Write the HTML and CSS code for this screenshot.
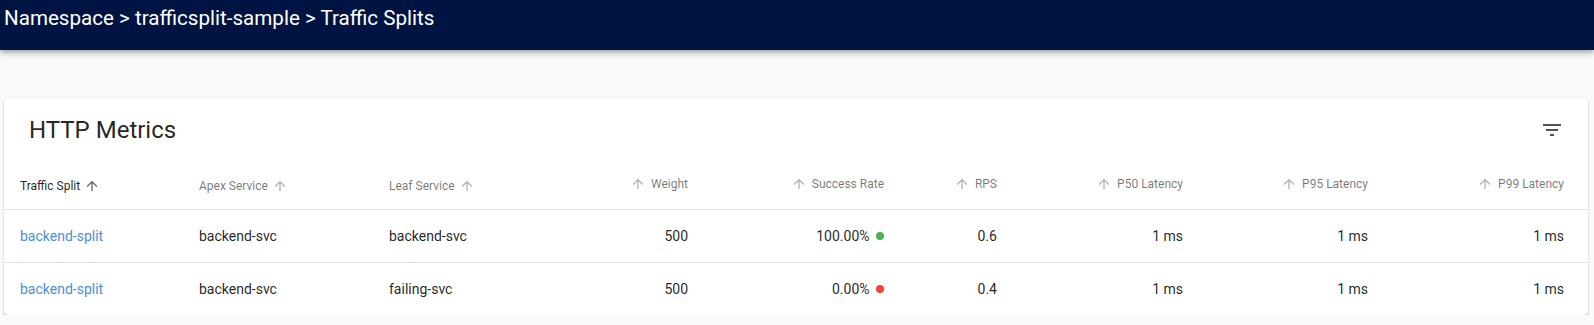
FILE: index.html
```html
<!DOCTYPE html>
<html lang="en">
<head>
    <meta charset="UTF-8">
    <title>Traffic Splits</title>
    <link rel="stylesheet" href="styles.css">
</head>
<body>
    <header class="app-bar">
        <div class="crumbs">Namespace &gt; trafficsplit-sample &gt; Traffic Splits</div>
    </header>

    <main class="content">
        <section class="card">
            <div class="card-toolbar">
                <h2 class="card-title">HTTP Metrics</h2>
                <svg class="filter-icon" viewBox="0 0 24 24" width="24" height="24">
                    <path d="M10 18h4v-2h-4v2zM3 6v2h18V6H3zm3 7h12v-2H6v2z"></path>
                </svg>
            </div>

            <table class="metrics">
                <colgroup>
                    <col style="width:179px">
                    <col style="width:190px">
                    <col style="width:190px">
                    <col style="width:141px">
                    <col style="width:196px">
                    <col style="width:113px">
                    <col style="width:186px">
                    <col style="width:185px">
                    <col style="width:204px">
                </colgroup>
                <thead>
                    <tr>
                        <th class="active"><span class="sort">Traffic Split<svg class="arrow" viewBox="0 0 24 24"><path d="M4 12l1.41 1.41L11 7.83V20h2V7.83l5.58 5.59L20 12l-8-8-8 8z"/></svg></span></th>
                        <th><span class="sort">Apex Service<svg class="arrow" viewBox="0 0 24 24"><path d="M4 12l1.41 1.41L11 7.83V20h2V7.83l5.58 5.59L20 12l-8-8-8 8z"/></svg></span></th>
                        <th><span class="sort">Leaf Service<svg class="arrow" viewBox="0 0 24 24"><path d="M4 12l1.41 1.41L11 7.83V20h2V7.83l5.58 5.59L20 12l-8-8-8 8z"/></svg></span></th>
                        <th class="num"><span class="sort"><svg class="arrow" viewBox="0 0 24 24"><path d="M4 12l1.41 1.41L11 7.83V20h2V7.83l5.58 5.59L20 12l-8-8-8 8z"/></svg>Weight</span></th>
                        <th class="num"><span class="sort"><svg class="arrow" viewBox="0 0 24 24"><path d="M4 12l1.41 1.41L11 7.83V20h2V7.83l5.58 5.59L20 12l-8-8-8 8z"/></svg>Success Rate</span></th>
                        <th class="num"><span class="sort"><svg class="arrow" viewBox="0 0 24 24"><path d="M4 12l1.41 1.41L11 7.83V20h2V7.83l5.58 5.59L20 12l-8-8-8 8z"/></svg>RPS</span></th>
                        <th class="num"><span class="sort"><svg class="arrow" viewBox="0 0 24 24"><path d="M4 12l1.41 1.41L11 7.83V20h2V7.83l5.58 5.59L20 12l-8-8-8 8z"/></svg>P50 Latency</span></th>
                        <th class="num"><span class="sort"><svg class="arrow" viewBox="0 0 24 24"><path d="M4 12l1.41 1.41L11 7.83V20h2V7.83l5.58 5.59L20 12l-8-8-8 8z"/></svg>P95 Latency</span></th>
                        <th class="num last"><span class="sort"><svg class="arrow" viewBox="0 0 24 24"><path d="M4 12l1.41 1.41L11 7.83V20h2V7.83l5.58 5.59L20 12l-8-8-8 8z"/></svg>P99 Latency</span></th>
                    </tr>
                </thead>
                <tbody>
                    <tr>
                        <td><a class="link" href="#">backend-split</a></td>
                        <td>backend-svc</td>
                        <td>backend-svc</td>
                        <td class="num">500</td>
                        <td class="num">100.00% <span class="dot good"></span></td>
                        <td class="num">0.6</td>
                        <td class="num">1 ms</td>
                        <td class="num">1 ms</td>
                        <td class="num last">1 ms</td>
                    </tr>
                    <tr>
                        <td><a class="link" href="#">backend-split</a></td>
                        <td>backend-svc</td>
                        <td>failing-svc</td>
                        <td class="num">500</td>
                        <td class="num">0.00% <span class="dot bad"></span></td>
                        <td class="num">0.4</td>
                        <td class="num">1 ms</td>
                        <td class="num">1 ms</td>
                        <td class="num last">1 ms</td>
                    </tr>
                </tbody>
            </table>
        </section>
    </main>
</body>
</html>
```

FILE: styles.css
```css
body {
    margin: 0;
    padding: 0;
    background-color: #fafafa;
    font-family: Roboto, 'Liberation Sans', sans-serif;
    color: rgba(0, 0, 0, 0.87);
}

.app-bar {
    height: 50px;
    background-color: #001443;
    box-shadow: 0 2px 4px -1px rgba(0, 0, 0, 0.2), 0 4px 5px 0 rgba(0, 0, 0, 0.14), 0 1px 10px 0 rgba(0, 0, 0, 0.12);
    position: relative;
    z-index: 1;
}

.crumbs {
    color: #ffffff;
    font-size: 20.6px;
    line-height: 24px;
    padding: 6px 0 0 4px;
}

.content {
    padding: 48px 6px 0 4px;
}

.card {
    background: #fff;
    border-radius: 4px;
    box-shadow: 0 1px 3px 0 rgba(0, 0, 0, 0.2), 0 1px 1px 0 rgba(0, 0, 0, 0.14), 0 2px 1px -1px rgba(0, 0, 0, 0.12);
    overflow: hidden;
}

.card-toolbar {
    height: 64px;
    display: flex;
    align-items: center;
    justify-content: space-between;
    padding: 0 24px 0 25px;
}

.card-title {
    margin: 0;
    font-size: 24px;
    font-weight: 400;
    line-height: 1;
}

.filter-icon {
    fill: #555;
}

.metrics {
    width: 100%;
    table-layout: fixed;
    border-collapse: collapse;
}

.metrics th,
.metrics td {
    padding: 0 16px;
    text-align: left;
    white-space: nowrap;
    border-bottom: 1px solid #e0e0e0;
}

.metrics th {
    height: 47px;
    font-size: 12px;
    font-weight: 400;
    color: rgba(0, 0, 0, 0.54);
}

.metrics th.active {
    color: rgba(0, 0, 0, 0.87);
}

.metrics td {
    height: 52px;
    font-size: 14px;
}

.metrics tbody tr:last-child td {
    border-bottom: none;
}

.metrics .num {
    text-align: right;
}

.metrics .last {
    padding-right: 24px;
}

.sort {
    display: inline-flex;
    align-items: center;
}

.arrow {
    width: 16px;
    height: 16px;
    margin: 0 4px;
    fill: rgba(0, 0, 0, 0.3);
}

.num .arrow {
    margin: 0 5px 0 0;
}

.active .arrow {
    fill: rgba(0, 0, 0, 0.6);
}

.link {
    color: #4a8fd6;
    text-decoration: none;
}

.dot {
    display: inline-block;
    width: 8px;
    height: 8px;
    border-radius: 50%;
    margin-left: 3px;
    vertical-align: 1px;
}

.dot.good {
    background-color: #4caf50;
}

.dot.bad {
    background-color: #f44336;
}
```
